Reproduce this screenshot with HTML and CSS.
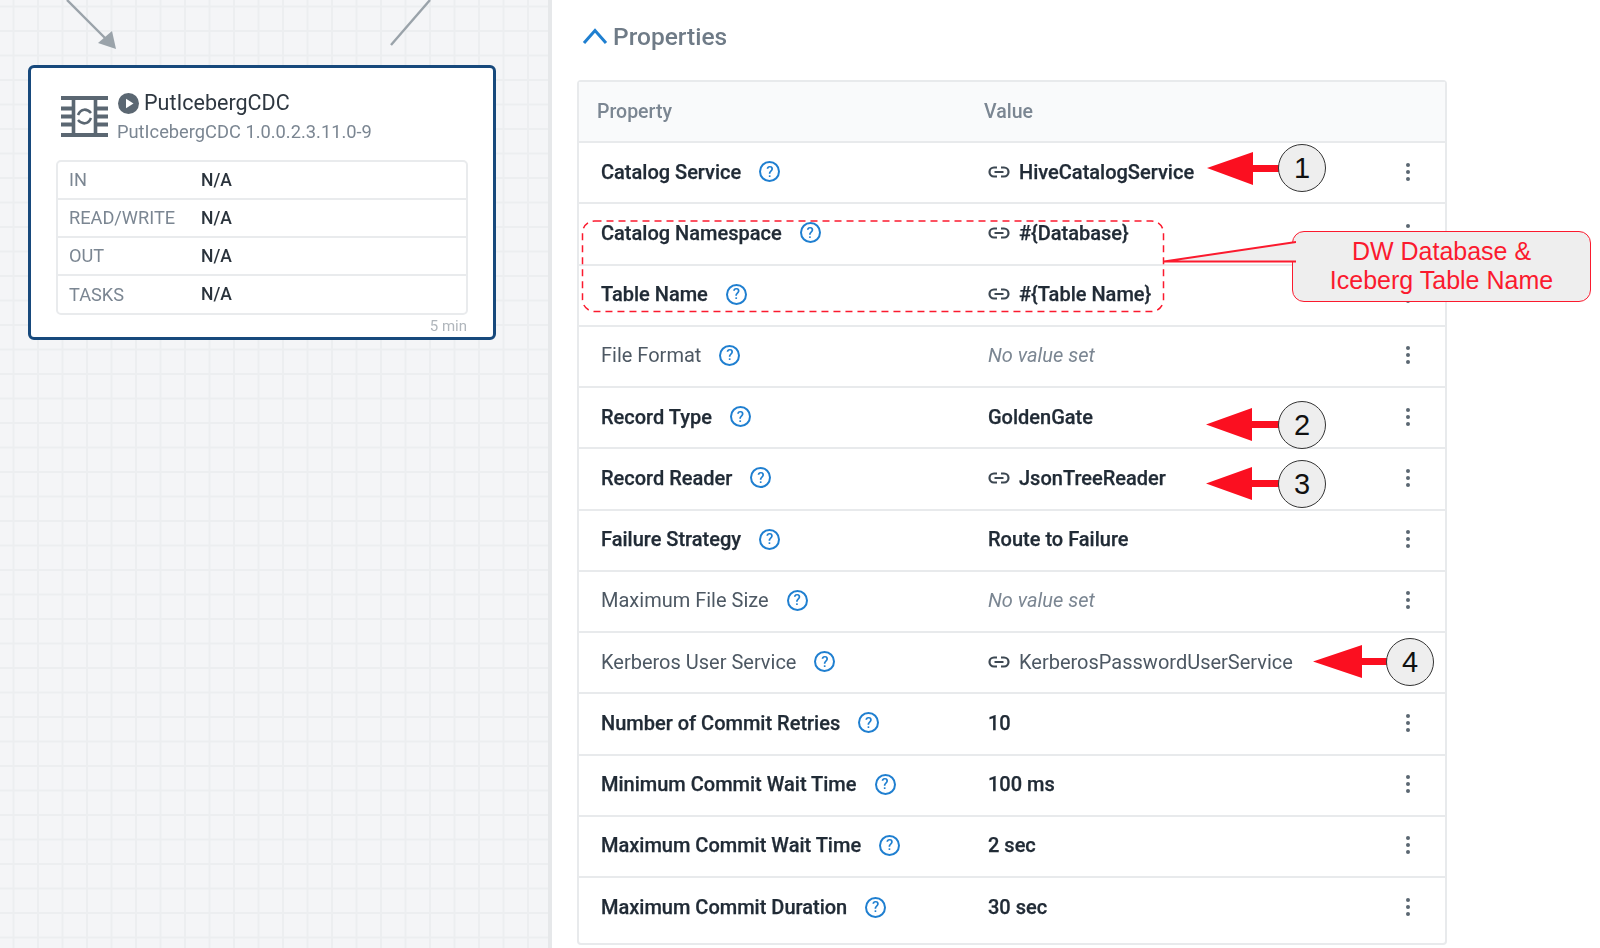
FILE: index.html
```html
<!DOCTYPE html>
<html lang="en">
<head>
    <meta charset="UTF-8">
    <title>PutIcebergCDC Properties</title>
    <link rel="stylesheet" href="styles.css">
</head>
<body>
    <!-- Flow canvas with the selected processor -->
    <div class="canvas">
        <svg class="connections" width="551" height="60" viewBox="0 0 551 60">
            <path d="M67 0 L108 41" stroke="#9aa3aa" stroke-width="2.4" fill="none"/>
            <path d="M116 49 L98 43 L112 31 Z" fill="#9aa3aa"/>
            <path d="M430 0 L391 45" stroke="#9aa3aa" stroke-width="2.4" fill="none"/>
        </svg>
        <div class="processor">
            <div class="processor-head">
                <svg class="chip-icon" width="47" height="41" viewBox="0 0 47 41">
                    <path d="M0 2 H47 M0 39 H47 M0 12.5 H11 M0 20.5 H11 M0 28.5 H11 M36 12.5 H47 M36 20.5 H47 M36 28.5 H47" stroke="#5b6772" stroke-width="4" fill="none"/>
                    <path d="M12.5 2 V39 M34.5 2 V39" stroke="#5b6772" stroke-width="3.6" fill="none"/>
                    <path d="M17 19 C20 12 26 12.5 30 17 M30 22 C27 29 21 28.5 17 24" stroke="#5b6772" stroke-width="2.6" fill="none"/>
                </svg>
                <div class="processor-names">
                    <div class="processor-title">
                        <svg class="play-icon" width="21" height="21" viewBox="0 0 21 21">
                            <circle cx="10.5" cy="10.5" r="10.5" fill="#5b6772"/>
                            <path d="M8 5.8 L15.5 10.5 L8 15.2 Z" fill="#fff"/>
                        </svg>
                        <span>PutIcebergCDC</span>
                    </div>
                    <div class="processor-version">PutIcebergCDC 1.0.0.2.3.11.0-9</div>
                </div>
            </div>
            <div class="stats">
                <div class="stat"><span class="stat-label">IN</span><span class="stat-value">N/A</span></div>
                <div class="stat"><span class="stat-label">READ/WRITE</span><span class="stat-value">N/A</span></div>
                <div class="stat"><span class="stat-label">OUT</span><span class="stat-value">N/A</span></div>
                <div class="stat"><span class="stat-label">TASKS</span><span class="stat-value">N/A</span></div>
            </div>
            <div class="interval">5 min</div>
        </div>
    </div>

    <!-- Properties panel -->
    <div class="panel">
        <div class="panel-title">
            <svg width="26" height="18" viewBox="0 0 26 18">
                <path d="M2 16 L13 3.5 L24 16" stroke="#1f7fd0" stroke-width="3" fill="none"/>
            </svg>
            <span>Properties</span>
        </div>
        <div class="props">
            <div class="props-head">
                <span class="col-name">Property</span>
                <span class="col-value">Value</span>
            </div>
            <div class="prop set">
                <div class="prop-name">Catalog Service <span class="help">?</span></div>
                <div class="prop-value"><svg class="link-icon" viewBox="0 0 22 12"><use href="#link"/></svg>HiveCatalogService</div>
                <div class="more"><i></i><i></i><i></i></div>
            </div>
            <div class="prop set">
                <div class="prop-name">Catalog Namespace <span class="help">?</span></div>
                <div class="prop-value"><svg class="link-icon" viewBox="0 0 22 12"><use href="#link"/></svg>#{Database}</div>
                <div class="more"><i></i><i></i><i></i></div>
            </div>
            <div class="prop set">
                <div class="prop-name">Table Name <span class="help">?</span></div>
                <div class="prop-value"><svg class="link-icon" viewBox="0 0 22 12"><use href="#link"/></svg>#{Table Name}</div>
                <div class="more"><i></i><i></i><i></i></div>
            </div>
            <div class="prop">
                <div class="prop-name">File Format <span class="help">?</span></div>
                <div class="prop-value empty">No value set</div>
                <div class="more"><i></i><i></i><i></i></div>
            </div>
            <div class="prop set">
                <div class="prop-name">Record Type <span class="help">?</span></div>
                <div class="prop-value">GoldenGate</div>
                <div class="more"><i></i><i></i><i></i></div>
            </div>
            <div class="prop set">
                <div class="prop-name">Record Reader <span class="help">?</span></div>
                <div class="prop-value"><svg class="link-icon" viewBox="0 0 22 12"><use href="#link"/></svg>JsonTreeReader</div>
                <div class="more"><i></i><i></i><i></i></div>
            </div>
            <div class="prop set">
                <div class="prop-name">Failure Strategy <span class="help">?</span></div>
                <div class="prop-value">Route to Failure</div>
                <div class="more"><i></i><i></i><i></i></div>
            </div>
            <div class="prop">
                <div class="prop-name">Maximum File Size <span class="help">?</span></div>
                <div class="prop-value empty">No value set</div>
                <div class="more"><i></i><i></i><i></i></div>
            </div>
            <div class="prop">
                <div class="prop-name">Kerberos User Service <span class="help">?</span></div>
                <div class="prop-value"><svg class="link-icon" viewBox="0 0 22 12"><use href="#link"/></svg>KerberosPasswordUserService</div>
            </div>
            <div class="prop set">
                <div class="prop-name">Number of Commit Retries <span class="help">?</span></div>
                <div class="prop-value">10</div>
                <div class="more"><i></i><i></i><i></i></div>
            </div>
            <div class="prop set">
                <div class="prop-name">Minimum Commit Wait Time <span class="help">?</span></div>
                <div class="prop-value">100 ms</div>
                <div class="more"><i></i><i></i><i></i></div>
            </div>
            <div class="prop set">
                <div class="prop-name">Maximum Commit Wait Time <span class="help">?</span></div>
                <div class="prop-value">2 sec</div>
                <div class="more"><i></i><i></i><i></i></div>
            </div>
            <div class="prop set last">
                <div class="prop-name">Maximum Commit Duration <span class="help">?</span></div>
                <div class="prop-value">30 sec</div>
                <div class="more"><i></i><i></i><i></i></div>
            </div>
        </div>
    </div>

    <!-- Red annotations drawn on top of the screenshot -->
    <svg class="marks" width="1600" height="948" viewBox="0 0 1600 948">
        <defs>
            <symbol id="link" viewBox="0 0 22 12">
                <path d="M9 1.5 H6 a4.5 4.5 0 0 0 0 9 H9 M13 1.5 H16 a4.5 4.5 0 0 1 0 9 H13 M6.5 6 H15.5" stroke="#3d4852" stroke-width="2.2" fill="none"/>
            </symbol>
        </defs>
        <rect x="582.5" y="221" width="581" height="90.5" rx="12" fill="none" stroke="#fb1a2e" stroke-width="1.5" stroke-dasharray="7 5"/>
        <path d="M1207 168 L1253 152 V165 H1280 V172 H1253 V185 Z" fill="#fb0f20"/>
        <path d="M1206 424.5 L1252 408 V421 H1280 V428 H1252 V441 Z" fill="#fb0f20"/>
        <path d="M1206 483.5 L1252 467 V480 H1280 V487 H1252 V500 Z" fill="#fb0f20"/>
        <path d="M1313 661.5 L1362 645 V658 H1390 V665 H1362 V678 Z" fill="#fb0f20"/>
    </svg>

    <div class="badge badge-1">1</div>
    <div class="badge badge-2">2</div>
    <div class="badge badge-3">3</div>
    <div class="badge badge-4">4</div>

    <div class="callout">
        <svg class="callout-tail" width="133" height="30" viewBox="0 0 133 30">
            <path d="M133 1 L1 20.5 L133 20.5" fill="#eeeeee" stroke="#fb1a2e" stroke-width="1.8"/>
        </svg>
        DW Database &amp;<br>Iceberg Table Name
    </div>
</body>
</html>
```

FILE: styles.css
```css
* {
    box-sizing: border-box;
    margin: 0;
    padding: 0;
}

body {
    width: 1600px;
    height: 948px;
    display: flex;
    overflow: hidden;
    position: relative;
    background: #fff;
    font-family: Roboto, "Liberation Sans", sans-serif;
    color: #212b36;
    filter: blur(0.4px); /* source picture is a soft upscaled capture */
}

/* Canvas */
.canvas {
    width: 552px;
    height: 948px;
    flex-shrink: 0;
    position: relative;
    padding: 65px 0 0 28px;
    background-color: #f4f5f7;
    background-image:
        linear-gradient(to right, #eceef0 1.5px, transparent 1.5px),
        linear-gradient(to bottom, #eceef0 1.5px, transparent 1.5px);
    background-size: 24.5px 24.5px;
    background-position: 12.5px 5.5px;
    border-right: 4px solid #e6e8ea;
}

.connections {
    position: absolute;
    left: 0;
    top: 0;
}

.processor {
    width: 468px;
    height: 275px;
    padding: 23px 25px 0 25px;
    background: #fff;
    border: 3.5px solid #17497c;
    border-radius: 6px;
}

.processor-head {
    display: flex;
    gap: 9px;
    height: 69px;
    padding-left: 5px;
}

.chip-icon {
    margin-top: 5px;
    flex-shrink: 0;
}

.processor-title {
    display: flex;
    align-items: center;
    gap: 5px;
    font-size: 21.5px;
    line-height: 24px;
    color: #2e3740;
}

.play-icon {
    margin-left: 1px;
}

.processor-version {
    margin-top: 6px;
    font-size: 18.3px;
    line-height: 22px;
    color: #7b8692;
}

.stats {
    border: 2px solid #e9ebed;
    border-radius: 5px;
}

.stat {
    display: flex;
    align-items: center;
    height: 38px;
    padding: 0 0 1px 11px;
    font-size: 18.2px;
    border-bottom: 2px solid #e9ebed;
}

.stat:last-child {
    height: 37px;
    border-bottom: none;
}

.stat-label {
    width: 132px;
    color: #7b8692;
}

.stat-value {
    font-size: 17.5px;
    font-weight: 500;
    color: #2a333c;
}

.interval {
    margin-top: 2px;
    padding-right: 1px;
    text-align: right;
    font-size: 15px;
    color: #b0b6bc;
}

/* Properties panel */
.panel {
    flex: 1;
    padding: 0 0 0 25px;
}

.panel-title {
    display: flex;
    align-items: center;
    gap: 5px;
    height: 72px;
    padding-left: 5px;
    font-size: 24.5px;
    font-weight: 500;
    color: #6f7b87;
}

.props {
    width: 870px;
    margin-top: 8px;
    border: 2px solid #e8eaec;
    border-radius: 4px;
}

.props-head {
    display: flex;
    align-items: center;
    height: 61px;
    padding: 0 0 1px 18px;
    background: #f9fafb;
    font-size: 19.5px;
    font-weight: 500;
    color: #7b8692;
    border-bottom: 2px solid #e8eaec;
}

.col-name {
    width: 387px;
}

.prop {
    display: flex;
    align-items: center;
    height: 61.25px;
    padding: 0 0 2px 22px;
    font-size: 20px;
    color: #4d5863;
    border-bottom: 2px solid #e8eaec;
}

.prop.last {
    height: 65px;
    padding-bottom: 7px;
    border-bottom: none;
}

.prop.set {
    font-weight: 500;
    color: #212b36;
    -webkit-text-stroke: 0.25px #212b36;
}

.prop-name {
    width: 387px;
    display: flex;
    align-items: center;
    gap: 18px;
}

.prop-value {
    width: 417.5px;
    display: flex;
    align-items: center;
    gap: 9px;
}

.prop-value.empty {
    font-style: italic;
    color: #7b8692;
}

.help {
    width: 21px;
    height: 21px;
    display: flex;
    align-items: center;
    justify-content: center;
    border: 2px solid #1f7fd0;
    border-radius: 50%;
    font-size: 15px;
    font-weight: 500;
    color: #1f7fd0;
    -webkit-text-stroke: 0;
}

.link-icon {
    width: 22px;
    height: 12px;
    flex-shrink: 0;
}

.more {
    display: flex;
    flex-direction: column;
    gap: 3px;
}

.more i {
    display: block;
    width: 4px;
    height: 4px;
    border-radius: 50%;
    background: #5b6772;
}

/* Annotations */
.marks {
    position: absolute;
    left: 0;
    top: 0;
}

.badge {
    position: absolute;
    width: 48px;
    height: 48px;
    display: flex;
    align-items: center;
    justify-content: center;
    background: #eeeeee;
    border: 1.5px solid #333;
    border-radius: 50%;
    font-family: "Liberation Sans", sans-serif;
    font-size: 29px;
    color: #111;
}

.badge-1 { left: 1278px; top: 144px; }
.badge-2 { left: 1278px; top: 401px; }
.badge-3 { left: 1278px; top: 460px; }
.badge-4 { left: 1386px; top: 638px; }

.callout {
    position: absolute;
    left: 1292px;
    top: 231px;
    width: 299px;
    height: 71px;
    padding-top: 5px;
    background: #eeeeee;
    border: 1.8px solid #fb1a2e;
    border-radius: 12px;
    text-align: center;
    font-family: "Liberation Sans", sans-serif;
    font-size: 25px;
    line-height: 29px;
    color: #fb1a2e;
}

.callout-tail {
    position: absolute;
    left: -130.5px;
    top: 8.5px;
}
```
